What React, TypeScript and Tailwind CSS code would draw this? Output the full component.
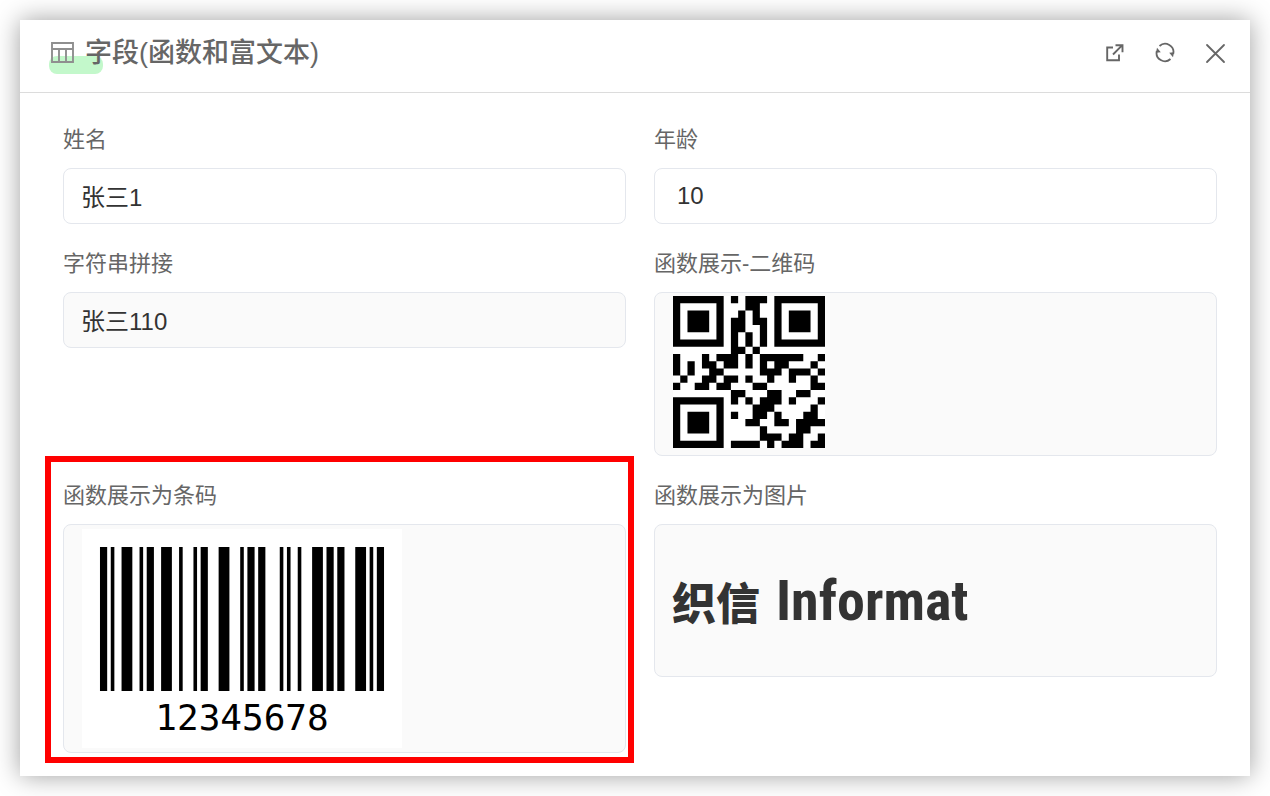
import React from 'react';

const QR_ROWS = [
  '111111101011101111111',
  '100000100011001000001',
  '101110100101001011101',
  '101110101101101011101',
  '101110101100101011101',
  '100000101010101000001',
  '111111101010101111111',
  '000000001101000000000',
  '100010111010111111001',
  '101011011010101100010',
  '101001100000111011101',
  '010011011010010010010',
  '100110110001100000011',
  '000000001100011001100',
  '111111101010111010001',
  '100000100001110000010',
  '101110101001101000110',
  '101110100011001101111',
  '101110100000100001100',
  '100000100000111011001',
  '111111101111010111011',
];

// Alternating bar and space widths, one Code 128 symbol per entry.
const CODE_128 = ['211232', '112232', '131123', '331121', '241112', '133121', '2331112'].join('');

function QrCode() {
  const d = QR_ROWS.map((row, y) =>
    [...row.matchAll(/1+/g)].map((m) => `M${m.index} ${y}h${m[0].length}v1h-${m[0].length}z`).join('')
  ).join('');
  return (
    <svg viewBox="0 0 21 21" className="size-[152px] bg-white" role="img" aria-label="二维码">
      <path d={d} fill="#000" />
    </svg>
  );
}

function Barcode({ value }: { value: string }) {
  let x = 5;
  const bars: React.ReactNode[] = [];
  [...CODE_128].forEach((c, i) => {
    const w = Number(c);
    if (i % 2 === 0) bars.push(<rect key={i} x={x} y="0" width={w} height="40" />);
    x += w;
  });
  return (
    <figure className="flex h-[219px] w-80 flex-col items-center bg-white pt-[18px]">
      <svg viewBox="0 0 89 40" preserveAspectRatio="none" className="h-36 w-full" aria-hidden="true">
        {bars}
      </svg>
      <figcaption className="mt-1 font-['DejaVu_Sans_Mono',monospace] text-[36px] leading-[46px] text-black">{value}</figcaption>
    </figure>
  );
}

const field = 'w-full rounded-lg border border-[#e4e7ed] text-2xl text-[#333] outline-none';
const label = 'mb-3 block text-[22px] leading-8 text-[#666]';

export default function App() {
  return (
    <div className="bg-white p-5 font-['Liberation_Sans','Noto_Sans_CJK_SC',sans-serif]">
      <main className="bg-white shadow-[0_0_24px_rgba(0,0,0,0.38)]">
        <header className="flex h-[73px] items-center justify-between border-b border-[#dcdcdc] pr-[23px] pb-[6px] pl-[30px]">
          <div className="relative flex items-center gap-[11px]">
            <span className="absolute top-[23px] -left-px h-[18px] w-[54px] rounded-lg bg-[#c3f8cb]" />
            <svg viewBox="0 0 24 24" className="relative size-6" fill="none" stroke="#8f8f8f" strokeWidth="1.9" aria-hidden="true">
              <path d="M2 2h21v19H2zM2 8h21M9 8v13M16 8v13" />
            </svg>
            <h1 className="relative text-[27px] leading-10 font-medium text-[#666]">字段(函数和富文本)</h1>
          </div>
          <div className="flex gap-[26px] text-[#666]">
            <button type="button" aria-label="打开" className="size-6">
              <svg viewBox="0 0 24 24" fill="none" stroke="currentColor" strokeWidth="1.9">
                <path d="M10 6.5H4.2v12.8H16V13.5M10 13.5l9.3-9.3M12.5 4.2h7v7" />
              </svg>
            </button>
            <button type="button" aria-label="刷新" className="size-6">
              <svg viewBox="0 0 24 24" fill="none" stroke="currentColor" strokeWidth="1.8">
                <path d="M6.5 5A8.3 8.3 0 0 1 20.2 13M17.5 18A8.3 8.3 0 0 1 3.8 10" />
                <path d="M4 6.8l3.8 4.4-4.8.6zM20 16.2l-3.8-4.4 4.8-.6z" fill="currentColor" stroke="none" />
              </svg>
            </button>
            <button type="button" aria-label="关闭" className="size-6">
              <svg viewBox="0 0 24 24" fill="none" stroke="currentColor" strokeWidth="1.8" strokeLinecap="round">
                <path d="M4 4l17 17M21 4L4 21" />
              </svg>
            </button>
          </div>
        </header>

        <form className="grid grid-cols-2 gap-x-7 gap-y-6 pt-[31px] pr-[33px] pb-[23px] pl-[43px]">
          <div>
            <label htmlFor="name" className={label}>姓名</label>
            <input id="name" defaultValue="张三1" className={`${field} h-14 bg-white px-[17px] pb-[2px]`} />
          </div>
          <div>
            <label htmlFor="age" className={label}>年龄</label>
            <input id="age" inputMode="numeric" defaultValue="10" className={`${field} h-14 bg-white px-[22px]`} />
          </div>
          <div>
            <label htmlFor="joined" className={label}>字符串拼接</label>
            <input id="joined" readOnly defaultValue="张三110" className={`${field} h-14 bg-[#fafafa] px-[17px] pb-[2px]`} />
          </div>
          <div>
            <h2 className={label}>函数展示-二维码</h2>
            <div className={`${field} h-[164px] bg-[#fafafa] px-[18px] pt-[3px]`}>
              <QrCode />
            </div>
          </div>
          <div className="relative">
            <span className="pointer-events-none absolute -top-6 -right-2 -bottom-[10px] -left-[18px] border-[6px] border-[#ff0000]" />
            <h2 className={label}>函数展示为条码</h2>
            <div className={`${field} bg-[#fafafa] px-[18px] py-1`}>
              <Barcode value="12345678" />
            </div>
          </div>
          <div>
            <h2 className={label}>函数展示为图片</h2>
            <div className={`${field} flex h-[153px] items-center gap-4 bg-[#fafafa] px-[17px]`}>
              <span className="font-['Noto_Sans_CJK_SC',sans-serif] text-[44px] leading-none font-black">织信</span>
              <span className="font-['Roboto_Condensed','Liberation_Sans_Narrow',sans-serif] text-[56px] leading-none font-bold">Informat</span>
            </div>
          </div>
        </form>
      </main>
    </div>
  );
}
